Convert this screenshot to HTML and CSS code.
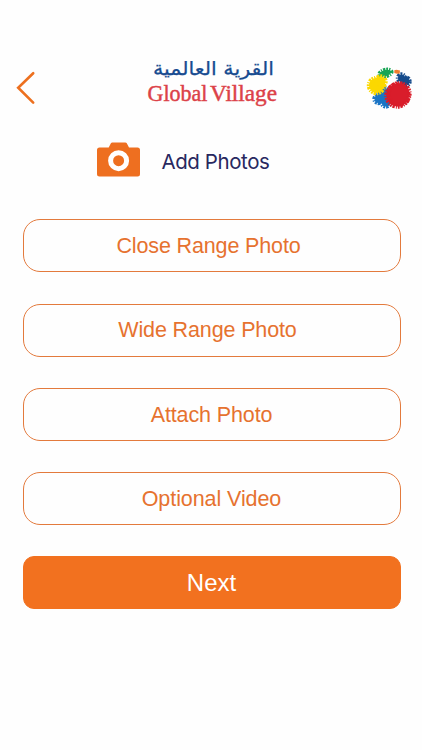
FILE: index.html
```html
<!DOCTYPE html>
<html lang="en">
<head>
<meta charset="utf-8">
<meta name="viewport" content="width=device-width, initial-scale=1">
<title>Add Photos</title>
<link rel="stylesheet" href="styles.css">
</head>
<body>
<header class="header">
  <svg class="back" viewBox="0 0 20 34" aria-label="Back"><path d="M17.2 2.2 2.2 16.8l15 14.8"/></svg>
  <svg class="wordmark" viewBox="0 0 140 56">
    <text class="arabic" x="69.5" y="18.500" text-anchor="middle" textLength="121" lengthAdjust="spacingAndGlyphs">القرية العالمية</text>
    <text class="latin" x="3.500" y="45" textLength="60" lengthAdjust="spacingAndGlyphs">Global</text>
    <text class="latin" x="66" y="45" textLength="67" lengthAdjust="spacingAndGlyphs">Village</text>
  </svg>
  <svg class="splash" viewBox="0 0 46 46">
    <g class="blue"><circle cx="11.500" cy="33" r="4"/><circle cx="17" cy="28" r="6"/><circle cx="19" cy="36" r="4.500"/></g>
    <g class="navy"><circle cx="34.500" cy="12" r="3.500"/><circle cx="38.500" cy="15.500" r="4"/></g>
    <g class="green"><ellipse cx="18.500" cy="7" rx="6" ry="3" transform="rotate(-14 18.500 7)"/></g>
    <g class="yellow"><circle cx="9.500" cy="19.500" r="7.500"/><circle cx="13.500" cy="15.500" r="5"/></g>
    <g class="red"><circle cx="30.500" cy="29.500" r="11"/><circle cx="32" cy="27.800" r="10.500"/></g>
    <path class="orange" d="m27.300 4.200 2.200-.5 3.500.8-.3 3-2.700.3-2.700-.7Z"/>
  </svg>
</header>
<main>
  <div class="title">
    <svg class="camera" viewBox="0 0 44 36">
      <path d="M2.500 5.500h9.200l2.200-4.200Q14.300.5 15.300.5h13q1 0 1.500.8L32 5.500h8.500q2.500 0 2.500 2.500v24q0 2.500-2.500 2.500h-38Q0 34.500 0 32V8Q0 5.500 2.500 5.500Z"/>
      <circle cx="21.600" cy="18.700" r="8"/>
    </svg>
    <h1>Add Photos</h1>
  </div>
  <div class="actions">
    <button class="button close-range">Close Range Photo</button>
    <button class="button wide-range">Wide Range Photo</button>
    <button class="button attach">Attach Photo</button>
    <button class="button video">Optional Video</button>
    <button class="button next">Next</button>
  </div>
</main>
</body>
</html>
```
FILE: styles.css
```css
* { box-sizing: border-box; }
body {
  margin: 0;
  padding-top: 56px;
  background: #fefefe;
  font-family: "Liberation Sans", Arial, sans-serif;
}
.header {
  display: flex;
  height: 60px;
  padding-left: 16px;
}
.back { width: 20px; height: 34px; margin-top: 14.5px; }
.back path {
  fill: none;
  stroke: #ed701f;
  stroke-width: 2.6;
  stroke-linecap: round;
}
.wordmark { width: 140px; height: 56px; margin-left: 108px; overflow: visible; }
.arabic {
  font: 19px "DejaVu Sans", sans-serif;
  fill: #174b90;
  stroke: #174b90;
  stroke-width: .25;
  direction: rtl;
}
.latin {
  font: 23px "Liberation Serif", serif;
  fill: #dc4148;
  stroke: #dc4148;
  stroke-width: .45;
}
.splash { width: 46px; height: 46px; margin: 9.5px 0 0 83px; overflow: visible; }
.splash g { stroke-width: 4.4; stroke-dasharray: 1.6 1 .9 1.1 2.2 .8; }
.blue { fill: #1b75c5; stroke: #1b75c5; }
.navy { fill: #164c8c; stroke: #164c8c; }
.green { fill: #18a554; stroke: #18a554; }
.yellow { fill: #fbd800; stroke: #fbd800; }
.red { fill: #d91d2b; stroke: #d91d2b; }
.orange { fill: #ef7d2d; }
.title {
  display: flex;
  height: 36px;
  margin: 26px 0 0 97px;
}
.camera { width: 44px; height: 36px; fill: #ee6f20; }
.camera circle { fill: #ee6f20; stroke: #fff; stroke-width: 5; }
h1 {
  margin: 6px 0 0 20.5px;
  font: 400 20.5px/28px Inter, sans-serif;
  letter-spacing: -.42px;
  color: #28285f;
}
.actions {
  display: grid;
  gap: 31.3px;
  padding: 41.3px 21px 0 23px;
}
.button {
  height: 53px;
  padding: 2px 5px 0 0;
  border: 1.3px solid #e37a3d;
  border-radius: 17px;
  background: #fefefe;
  color: #e6722f;
  font: 21.5px "Liberation Sans", Arial, sans-serif;
}
.close-range { padding-right: 7px; letter-spacing: -.14px; }
.wide-range { padding: 1px 9px 0 0; letter-spacing: -.13px; }
.attach { padding-right: 1px; letter-spacing: -.12px; }
.video { padding-right: 1px; letter-spacing: -.08px; }
.next {
  padding: 1px 1px 0 0;
  border-color: #f2711f;
  border-radius: 11px;
  background: #f2711f;
  color: #fff;
  font-size: 24px;
}
```
